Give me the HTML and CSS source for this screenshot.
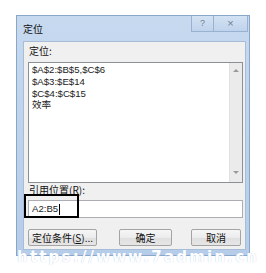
FILE: index.html
```html
<!DOCTYPE html>
<html>
<head>
<meta charset="utf-8">
<link rel="stylesheet" href="styles.css">
</head>
<body>
<div class="stage">
  <div class="dialog">
    <div class="titlebar">
      <span class="title">定位</span>
      <div class="tbtns">
        <span class="tbtn help">?</span>
        <span class="tbtn close">×</span>
      </div>
    </div>
    <div class="panel">
      <div class="label top-label">定位:</div>
      <div class="listbox">
        <div class="items">
          <div>$A$2:$B$5,$C$6</div>
          <div>$A$3:$E$14</div>
          <div>$C$4:$C$15</div>
          <div>效率</div>
        </div>
        <div class="scroll">
          <span class="arr up"></span>
          <span class="arr down"></span>
        </div>
      </div>
      <div class="label ref-label">引用位置(<u>R</u>):</div>
      <div class="input"><span>A2:B5</span><span class="caret"></span></div>
      <div class="buttons">
        <div class="btn b1">定位条件(<u>S</u>)...</div>
        <div class="btn b2">确定</div>
        <div class="btn b3">取消</div>
      </div>
    </div>
  </div>
  <div class="mark"></div>
  <div class="watermark">https://www.7admin.cn</div>
</div>
</body>
</html>
```
FILE: styles.css
```css
* { box-sizing: border-box; }
html, body { margin: 0; padding: 0; background: #fff; }
.stage {
  position: relative;
  width: 266px;
  height: 273px;
  overflow: hidden;
  padding: 15px 0 0 16px;
  font-family: "Noto Sans CJK SC", "Liberation Sans", sans-serif;
  color: #1a1a1a;
}
.dialog {
  width: 234px;
  background: linear-gradient(#c6d9ef, #b5cde9);
  border: 1px solid #8aa6c8;
  padding: 0 3px 5px 6px;
  display: flex;
  flex-direction: column;
}
.titlebar {
  height: 25px;
  display: flex;
  align-items: flex-start;
  justify-content: space-between;
}
.title {
  font-size: 10px;
  line-height: 10px;
  margin-top: 8px;
  color: #111;
}
.tbtns {
  display: flex;
  margin-right: -2px;
}
.tbtn {
  height: 16px;
  border: 1px solid #9ab2d0;
  border-top: none;
  background: linear-gradient(#d3e2f3, #bfd3ec);
  font-size: 9px;
  line-height: 15px;
  text-align: center;
  color: #6f7f93;
  font-family: "Liberation Sans", sans-serif;
}
.help { width: 22px; border-right: none; }
.close { width: 35px; font-size: 11px; }
.panel {
  background: #f0f0f0;
  border: 1px solid #a7bcd6;
  height: 209px;
  padding: 0 2px 0 4px;
  display: flex;
  flex-direction: column;
}
.label {
  font-size: 10px;
  line-height: 12px;
  color: #111;
}
.top-label { margin-top: 3px; margin-left: 1px; height: 17px; }
.listbox {
  width: 215px;
  height: 121px;
  background: #fff;
  border: 1px solid #8c8f94;
  display: flex;
}
.items {
  flex: 1;
  padding: 1px 0 0 3px;
  font-family: "Liberation Sans", "Noto Sans CJK SC", sans-serif;
  font-size: 9.6px;
  line-height: 11.8px;
  color: #222;
}
.scroll {
  width: 13px;
  background: #ebebeb;
  border-left: 1px solid #e2e2e2;
  display: flex;
  flex-direction: column;
  justify-content: space-between;
  align-items: center;
  padding: 6px 0 8px;
}
.arr { width: 0; height: 0; border-left: 3px solid transparent; border-right: 3px solid transparent; }
.up { border-bottom: 3px solid #9a9a9a; }
.down { border-top: 3px solid #9a9a9a; }
.ref-label { margin-top: 1px; margin-left: 1px; height: 16px; }
.ref-label u, .btn u { text-decoration: underline; }
.input {
  width: 215px;
  height: 18px;
  background: #fff;
  border: 1px solid #abadb3;
  font-family: "Liberation Sans", sans-serif;
  font-size: 9.6px;
  line-height: 16px;
  padding-left: 3px;
  display: flex;
  align-items: center;
  color: #222;
}
.caret { width: 1px; height: 11px; background: #000; margin-left: 1px; }
.buttons {
  display: flex;
  margin-top: 11px;
  margin-left: 0;
}
.btn {
  height: 17px;
  border: 1px solid #a4a4a4;
  border-radius: 2px;
  background: linear-gradient(#f6f6f6 0%, #ececec 50%, #dfdfdf 51%, #e6e6e6 100%);
  font-size: 10px;
  line-height: 15px;
  text-align: center;
  color: #111;
}
.b1 { width: 69px; }
.b2 { width: 53px; margin-left: 22px; }
.b3 { width: 50px; margin-left: 19px; }
.mark {
  position: absolute;
  left: 24px;
  top: 194px;
  width: 55px;
  height: 24px;
  border: 2px solid #000;
}
.watermark {
  position: absolute;
  left: 17px;
  top: 248px;
  font-family: "DejaVu Sans", sans-serif;
  font-weight: bold;
  font-size: 15px;
  letter-spacing: 2.2px;
  color: #fff;
  text-shadow: 0 0 1px #a9c2e2;
  white-space: nowrap;
}
```
